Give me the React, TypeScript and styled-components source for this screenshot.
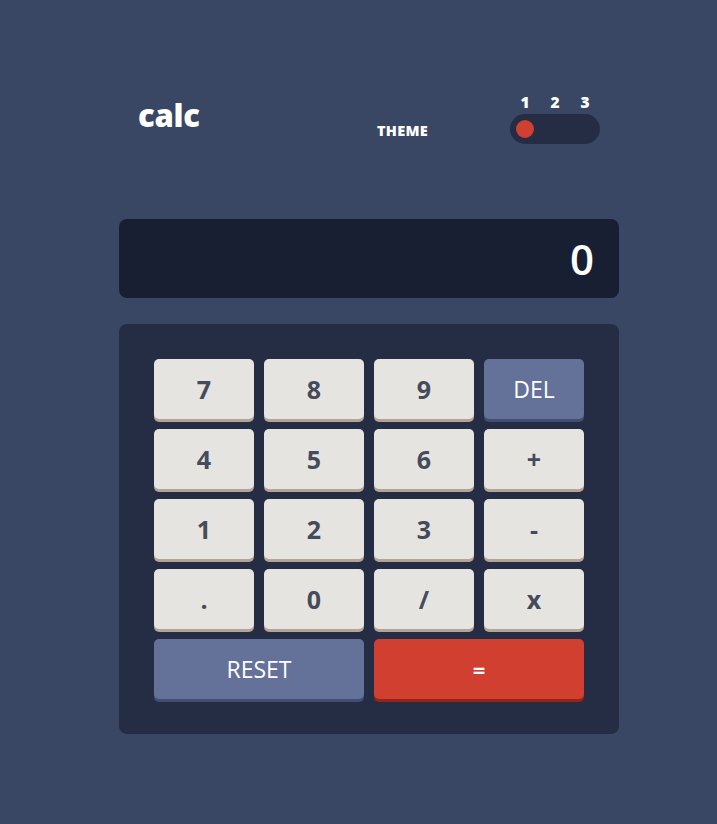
import React from "react";
import styled, { createGlobalStyle } from "styled-components";

const Global = createGlobalStyle`
  html, body { margin: 0; padding: 0; }
  body {
    background: #3a4764;
    font-family: "Open Sans", "Liberation Sans", sans-serif;
    min-height: 824px;
  }
`;

const Page = styled.main`
  width: 500px;
  margin: 0 0 0 119px;
  padding-top: 94px;
  display: flex;
  flex-direction: column;
`;

const Header = styled.header`
  display: flex;
  justify-content: space-between;
  align-items: flex-end;
  padding: 0 19px;
  color: #ffffff;
`;

const Logo = styled.h1`
  margin: 0 0 13px;
  font-size: 31px;
  font-weight: 800;
  line-height: 1;
  letter-spacing: -0.3px;
`;

const ThemeGroup = styled.div`
  display: flex;
  align-items: flex-end;
  gap: 82px;
`;

const ThemeLabel = styled.span`
  font-size: 14.5px;
  font-weight: 800;
  letter-spacing: 0.3px;
  line-height: 17px;
  margin-bottom: 5px;
`;

const ToggleColumn = styled.div`
  display: flex;
  flex-direction: column;
  width: 90px;
  gap: 3px;
`;

const Numbers = styled.div`
  display: grid;
  grid-template-columns: repeat(3, 1fr);
  text-align: center;
  font-size: 15.5px;
  font-weight: 800;
  line-height: 17px;
`;

const Track = styled.div`
  height: 30px;
  border-radius: 15px;
  background: #242d44;
  display: grid;
  grid-template-columns: repeat(3, 1fr);
  align-items: center;
`;

const Knob = styled.span`
  justify-self: center;
  width: 18px;
  height: 18px;
  border-radius: 50%;
  background: #d03f2f;
`;

const Screen = styled.div`
  margin-top: 75px;
  height: 79px;
  border-radius: 8px;
  background: #181f33;
  color: #ffffff;
  display: flex;
  align-items: center;
  justify-content: flex-end;
  padding: 0 25px;
  font-size: 42px;
  font-weight: 600;
`;

const Keypad = styled.div`
  margin-top: 26px;
  border-radius: 8px;
  background: #242d44;
  padding: 35px;
  display: grid;
  grid-template-columns: repeat(4, 100px);
  grid-auto-rows: 60px;
  gap: 10px;
`;

type Variant = "num" | "fn" | "eq";

const Key = styled.button<{ $variant?: Variant; $span?: number }>`
  border: none;
  border-radius: 5px;
  cursor: pointer;
  font-family: "Open Sans", "Liberation Sans", sans-serif;
  grid-column: span ${(p) => p.$span ?? 1};
  padding: 0;
  ${(p) =>
    p.$variant === "fn"
      ? `
    background: #647198;
    box-shadow: 0 3px 0 #414e73;
    color: #ffffff;
    font-size: 23px;
    font-weight: 500;
  `
      : p.$variant === "eq"
      ? `
    background: #d03f2f;
    box-shadow: 0 3px 0 #93261a;
    color: #ffffff;
    font-size: 22px;
    font-weight: 700;
  `
      : `
    background: #e6e4e0;
    box-shadow: 0 3px 0 #b3a497;
    color: #444b5a;
    font-size: 25px;
    font-weight: 700;
  `}
`;

const keys: { label: string; variant?: Variant; span?: number }[] = [
  { label: "7" },
  { label: "8" },
  { label: "9" },
  { label: "DEL", variant: "fn" },
  { label: "4" },
  { label: "5" },
  { label: "6" },
  { label: "+" },
  { label: "1" },
  { label: "2" },
  { label: "3" },
  { label: "-" },
  { label: "." },
  { label: "0" },
  { label: "/" },
  { label: "x" },
  { label: "RESET", variant: "fn", span: 2 },
  { label: "=", variant: "eq", span: 2 },
];

export default function App() {
  return (
    <>
      <Global />
      <Page>
        <Header>
          <Logo>calc</Logo>
          <ThemeGroup>
            <ThemeLabel>THEME</ThemeLabel>
            <ToggleColumn>
              <Numbers>
                <span>1</span>
                <span>2</span>
                <span>3</span>
              </Numbers>
              <Track>
                <Knob />
              </Track>
            </ToggleColumn>
          </ThemeGroup>
        </Header>
        <Screen>0</Screen>
        <Keypad>
          {keys.map((k) => (
            <Key key={k.label} $variant={k.variant} $span={k.span}>
              {k.label}
            </Key>
          ))}
        </Keypad>
      </Page>
    </>
  );
}
